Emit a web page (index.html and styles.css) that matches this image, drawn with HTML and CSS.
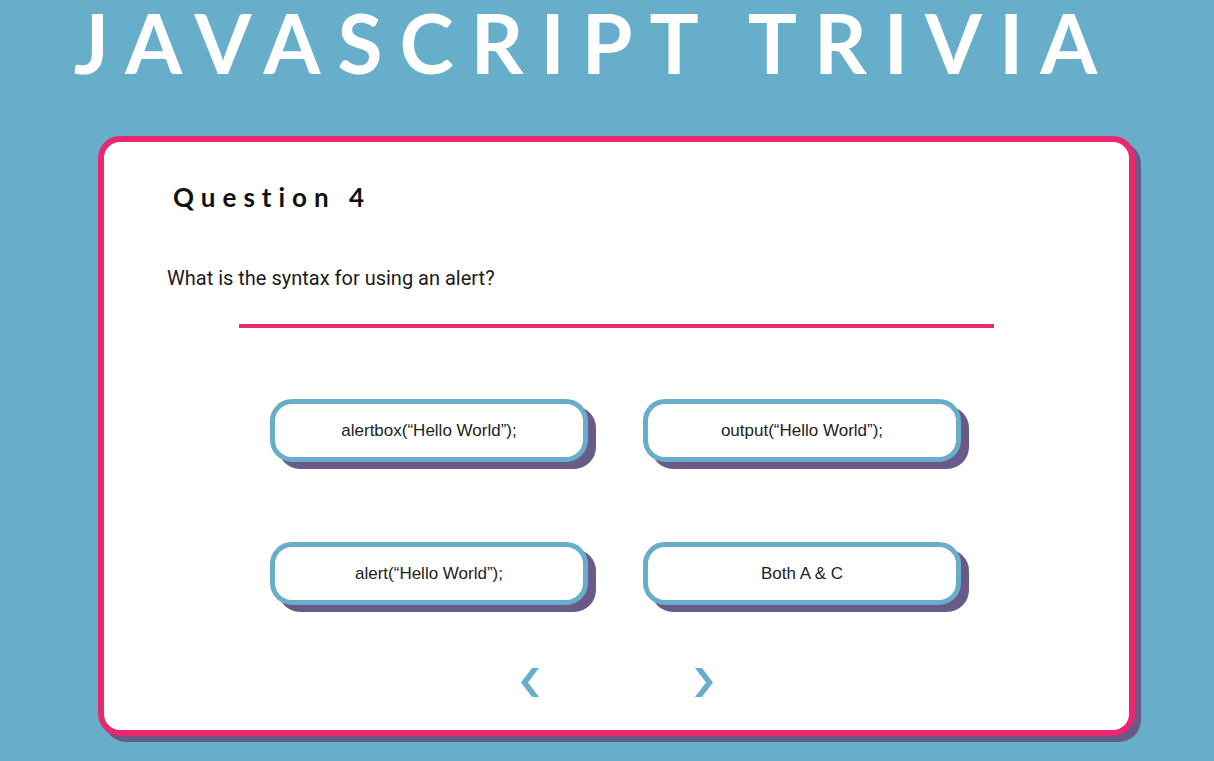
FILE: index.html
```html
<!DOCTYPE html>
<html lang="en">
<head>
<meta charset="utf-8">
<title>JavaScript Trivia</title>
<link rel="stylesheet" href="styles.css">
</head>
<body>
<h1 class="title">JAVASCRIPT TRIVIA</h1>
<main class="card">
  <h2 class="q-number">Question 4</h2>
  <p class="q-text">What is the syntax for using an alert?</p>
  <div class="divider"></div>
  <div class="answers">
    <button class="answer">alertbox(“Hello World”);</button>
    <button class="answer">output(“Hello World”);</button>
    <button class="answer">alert(“Hello World”);</button>
    <button class="answer">Both A &amp; C</button>
  </div>
  <nav class="nav">
    <button class="arrow" aria-label="Previous">
      <svg width="18" height="29" viewBox="0 0 18 29"><polygon points="11,0 18,0 7,14.5 18,29 11,29 0,14.5" fill="#67aecb"/></svg>
    </button>
    <button class="arrow" aria-label="Next">
      <svg width="18" height="29" viewBox="0 0 18 29"><polygon points="0,0 7,0 18,14.5 7,29 0,29 11,14.5" fill="#67aecb"/></svg>
    </button>
  </nav>
</main>
</body>
</html>
```
FILE: styles.css
```css
html, body {
  margin: 0;
  padding: 0;
}
body {
  background: #67aecb;
  min-height: 761px;
  overflow: hidden;
}
.title {
  margin: 0;
  padding: 1px 26px 0 0;
  font-family: Lato, "Liberation Sans", sans-serif;
  font-weight: 700;
  font-size: 82px;
  line-height: 82px;
  letter-spacing: 17px;
  color: #fff;
  text-align: center;
  white-space: nowrap;
}
.card {
  box-sizing: border-box;
  margin: 53px 0 0 98px;
  width: 1037px;
  height: 600px;
  background: #fff;
  border: 6px solid #e8296f;
  border-radius: 22px;
  box-shadow: 6px 6px 0 #6a5a87;
  padding: 42px 0 0 0;
  display: flex;
  flex-direction: column;
}
.q-number {
  margin: 0 0 0 69px;
  font-family: Lato, "Liberation Sans", sans-serif;
  font-weight: 700;
  font-size: 26px;
  line-height: 26px;
  letter-spacing: 7px;
  color: #111;
}
.q-text {
  margin: 57px 0 0 63px;
  font-family: Roboto, "Liberation Sans", sans-serif;
  font-size: 20px;
  line-height: 23px;
  color: #1a1a1a;
}
.divider {
  margin: 34px auto 0;
  width: 755px;
  height: 4px;
  background: #e8296f;
}
.answers {
  margin: 71px 0 0 166px;
  display: grid;
  grid-template-columns: 318px 318px;
  column-gap: 55px;
  row-gap: 80px;
  justify-content: start;
}
.answer {
  box-sizing: border-box;
  height: 63px;
  background: #fff;
  border: 5px solid #67aecb;
  border-radius: 22px;
  box-shadow: 8px 7px 0 #6a5a87;
  font-family: "Liberation Sans", Arial, sans-serif;
  font-size: 17px;
  color: #222;
  padding: 0;
  cursor: pointer;
}
.nav {
  margin-top: 63px;
  display: flex;
  justify-content: center;
  gap: 156px;
}
.arrow {
  background: none;
  border: 0;
  padding: 0;
  width: 18px;
  height: 29px;
  display: block;
  cursor: pointer;
}
.arrow svg {
  display: block;
}
```
